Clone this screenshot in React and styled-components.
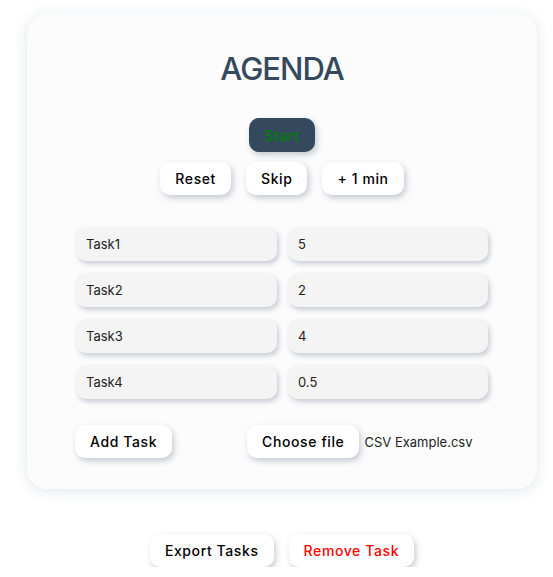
import React from "react";
import styled, { createGlobalStyle } from "styled-components";

const GlobalStyle = createGlobalStyle`
  body {
    margin: 0;
    background: #ffffff;
    font-family: Inter, "Noto Sans", sans-serif;
  }
`

const Page = styled.main`
  padding: 14px 0 0 27px;
  width: 510px;
`

const Card = styled.section`
  background: #fcfcfd;
  border-radius: 20px;
  box-shadow: 0 2px 14px rgba(52, 73, 94, 0.14);
  padding: 34px 49px 31px 49px;
  display: flex;
  flex-direction: column;
  align-items: center;
`

const Title = styled.h1`
  margin: 0;
  font-size: 31px;
  font-weight: 500;
  letter-spacing: -1px;
  color: #34495e;
  line-height: 42px;
`

const Button = styled.button`
  font-family: Inter, "Noto Sans", sans-serif;
  font-size: 14px;
  font-weight: 500;
  letter-spacing: 0.6px;
  height: 33px;
  padding: 0 15px;
  border: none;
  border-radius: 10px;
  background: ${props => props.$dark ? "#34495e" : "#ffffff"};
  color: ${props => props.$color || "#000000"};
  box-shadow: 2px 3px 6px rgba(52, 73, 94, 0.28);
  cursor: pointer;
  display: inline-flex;
  align-items: center;
  justify-content: center;
  box-sizing: border-box;
`

const StartButton = styled(Button)`
  height: 34px;
  margin-top: 28px;
`

const ButtonRow = styled.div`
  display: flex;
  gap: 15px;
  margin-top: 10px;
`

const TaskGrid = styled.div`
  margin-top: 32px;
  width: 412px;
  display: grid;
  grid-template-columns: 201px 200px;
  column-gap: 11px;
  row-gap: 12px;
`

const Field = styled.input`
  box-sizing: border-box;
  height: 34px;
  width: 100%;
  border: none;
  border-radius: 10px;
  background: #f4f4f4;
  box-shadow: 2px 3px 5px rgba(52, 73, 94, 0.25);
  padding: 0 10px;
  font-family: Inter, "Noto Sans", sans-serif;
  font-size: 13px;
  color: #222;
  outline: none;
`

const BottomRow = styled.div`
  margin-top: 26px;
  margin-left: -1px;
  align-self: stretch;
  display: flex;
  align-items: center;
  gap: 75px;
`

const FilePicker = styled.label`
  display: flex;
  align-items: center;
  gap: 5px;
  font-size: 13px;
  color: #222;
`

const Footer = styled.div`
  display: flex;
  justify-content: center;
  gap: 15px;
  margin-top: 45px;
`

const tasks = [
  { name: "Task1", minutes: "5" },
  { name: "Task2", minutes: "2" },
  { name: "Task3", minutes: "4" },
  { name: "Task4", minutes: "0.5" },
];

const App = () => {
  return (
    <React.Fragment>
      <GlobalStyle />
      <Page>
        <Card>
          <Title>AGENDA</Title>
          <StartButton $dark $color="#008000">Start</StartButton>
          <ButtonRow>
            <Button>Reset</Button>
            <Button>Skip</Button>
            <Button>+ 1 min</Button>
          </ButtonRow>
          <TaskGrid>
            {tasks.map(task => (
              <React.Fragment key={task.name}>
                <Field defaultValue={task.name} />
                <Field defaultValue={task.minutes} />
              </React.Fragment>
            ))}
          </TaskGrid>
          <BottomRow>
            <Button>Add Task</Button>
            <FilePicker>
              <Button as="span">Choose file</Button>
              CSV Example.csv
            </FilePicker>
          </BottomRow>
        </Card>
        <Footer>
          <Button>Export Tasks</Button>
          <Button $color="#ff0000">Remove Task</Button>
        </Footer>
      </Page>
    </React.Fragment>
  );
}

export default App;
